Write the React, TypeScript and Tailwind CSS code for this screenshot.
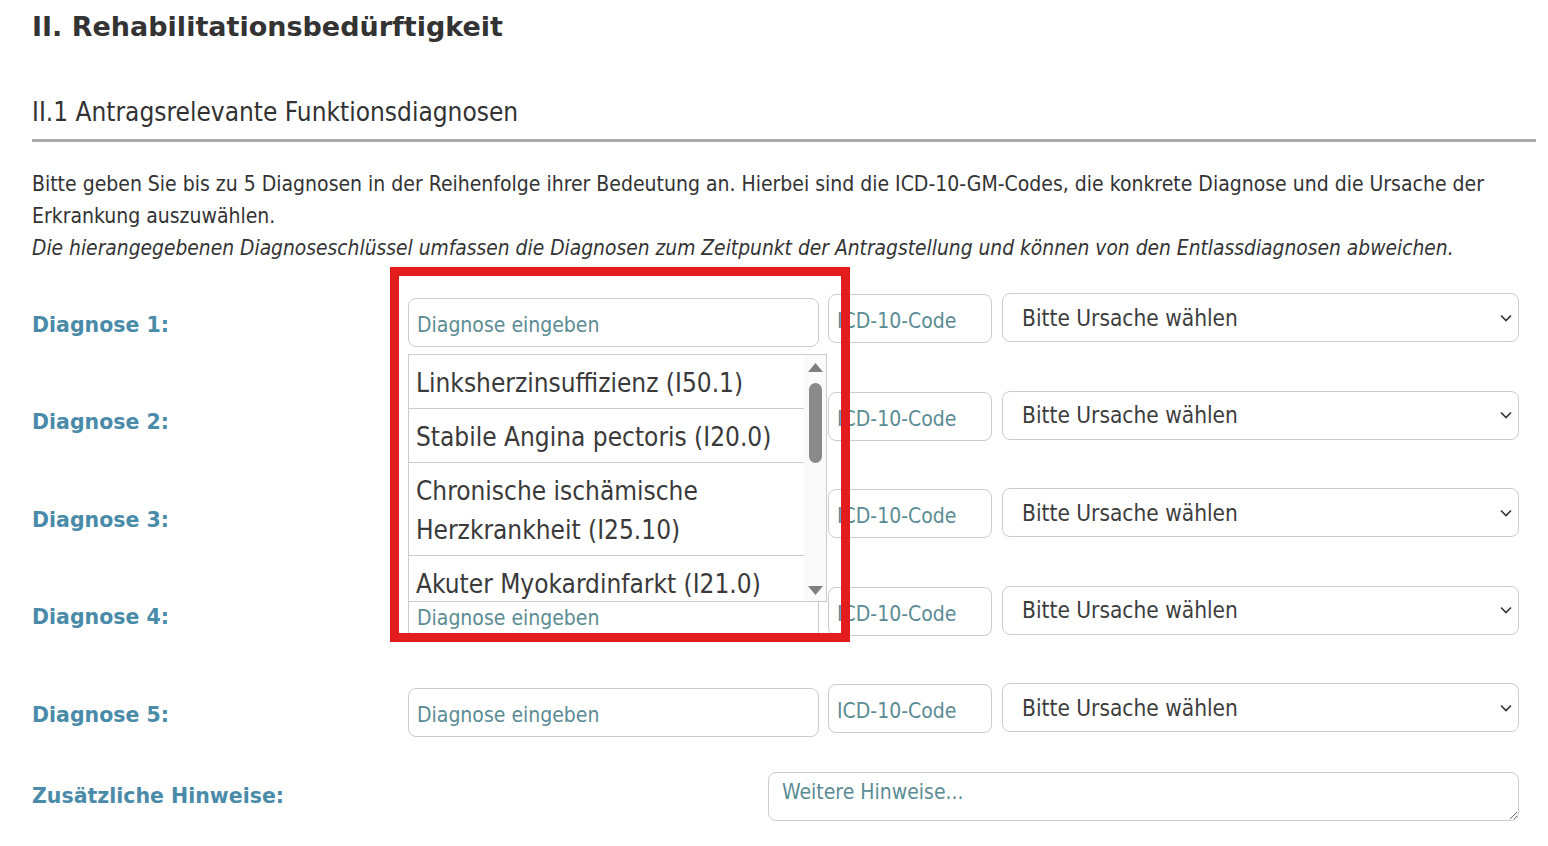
import React from "react";

const REG = "font-['DejaVu_Sans_Condensed','Liberation_Sans',sans-serif]";
const BOLD = "font-['DejaVu_Sans',sans-serif] font-bold";

const options = [
  "Linksherzinsuffizienz (I50.1)",
  "Stabile Angina pectoris (I20.0)",
  "Chronische ischämische Herzkrankheit (I25.10)",
  "Akuter Myokardinfarkt (I21.0)",
];

function Suggestions() {
  return (
    <div className="absolute left-0 top-[56px] z-10 flex h-[248px] w-[419px] overflow-hidden border border-[#cccccc] bg-white">
      <div className="flex-1">
        {options.map((o) => (
          <div
            key={o}
            className={`border-b border-[#cccccc] px-[7px] pt-[9px] pb-[5px] text-[26px] leading-[39px] text-[#3a3a3a] ${REG}`}
          >
            {o}
          </div>
        ))}
      </div>
      {/* scrollbar */}
      <div className="flex w-[22px] shrink-0 flex-col items-center bg-[#fafafa] pt-[8px] pb-[6px]">
        <svg width="15" height="9" viewBox="0 0 15 9">
          <path d="M7.5 0 L15 9 L0 9 Z" fill="#7f7f7f" />
        </svg>
        <div className="mt-[11px] h-[80px] w-[13px] rounded-full bg-[#8a8a8a]" />
        <div className="flex-1" />
        <svg width="15" height="9" viewBox="0 0 15 9">
          <path d="M0 0 L15 0 L7.5 9 Z" fill="#7f7f7f" />
        </svg>
      </div>
    </div>
  );
}

function DiagnoseRow({ n, open }: { n: number; open?: boolean }) {
  return (
    <div className="flex h-[50px] items-start">
      <div className={`mt-[5px] flex h-[49px] w-[376px] shrink-0 items-center pt-[5px] text-[20.5px] text-[#4a8ba9] ${BOLD}`}>
        Diagnose {n}:
      </div>
      <div className="relative mt-[5px] h-[49px] w-[411px] shrink-0">
        <input
          placeholder="Diagnose eingeben"
          className={`h-full w-full rounded-lg border border-[#cccccc] bg-white px-2 pt-[5px] text-[21px] text-[#333] outline-none placeholder:text-[#5b8c94] ${REG}`}
        />
        {open && <Suggestions />}
      </div>
      <input
        placeholder="ICD-10-Code"
        className={`ml-[9px] mt-[1px] h-[49px] w-[164px] shrink-0 rounded-lg border border-[#cccccc] bg-white px-2 pt-[5px] text-[21px] text-[#333] outline-none placeholder:text-[#5b8c94] ${REG}`}
      />
      <div className="relative ml-[10px] h-[49px] w-[517px] shrink-0">
        <select
          className={`h-full w-full appearance-none rounded-lg border border-[#cccccc] bg-white pl-[19px] pt-[2px] text-[22.5px] text-[#3d3d3d] outline-none ${REG}`}
        >
          <option>Bitte Ursache wählen</option>
        </select>
        <svg
          className="pointer-events-none absolute right-[7px] top-1/2 -translate-y-1/2"
          width="12"
          height="8"
          viewBox="0 0 12 8"
        >
          <path d="M1 1.5 L6 6.5 L11 1.5" fill="none" stroke="#333" strokeWidth="1.6" />
        </svg>
      </div>
    </div>
  );
}

export default function App() {
  return (
    <div className="relative min-h-screen w-full bg-white pl-8 pr-3">
      <h1 className={`pt-[9px] text-[27px] leading-[36px] text-[#333] ${BOLD}`}>
        II. Rehabilitationsbedürftigkeit
      </h1>

      <h2 className={`mt-[51px] border-b-[3px] border-[#aaaaaa] pb-[11px] text-[26px] leading-[32px] text-[#333] ${REG}`}>
        II.1 Antragsrelevante Funktionsdiagnosen
      </h2>

      <p className={`mt-[26px] text-[21px] leading-[32px] text-[#333] ${REG}`}>
        Bitte geben Sie bis zu 5 Diagnosen in der Reihenfolge ihrer Bedeutung an. Hierbei sind die ICD-10-GM-Codes, die
        konkrete Diagnose und die Ursache der Erkrankung auszuwählen.
        <br />
        <i className="text-[20.8px]">
          Die hierangegebenen Diagnoseschlüssel umfassen die Diagnosen zum Zeitpunkt der Antragstellung und können von den
          Entlassdiagnosen abweichen.
        </i>
      </p>

      <div className="mt-[29px] flex flex-col gap-[47.5px]">
        <DiagnoseRow n={1} open />
        <DiagnoseRow n={2} />
        <DiagnoseRow n={3} />
        <DiagnoseRow n={4} />
        <DiagnoseRow n={5} />
      </div>

      <div className="mt-[39px] flex items-center">
        <div className={`w-[736px] shrink-0 text-[20.5px] text-[#4a8ba9] ${BOLD}`}>Zusätzliche Hinweise:</div>
        <textarea
          placeholder="Weitere Hinweise..."
          className={`h-[49px] w-[751px] shrink-0 rounded-lg border border-[#cccccc] bg-white px-[13px] pt-1 text-[21px] text-[#333] outline-none placeholder:text-[#5b8c94] ${REG}`}
        />
      </div>

      {/* annotation frame */}
      <div className="pointer-events-none absolute left-[390px] top-[267px] z-20 h-[375px] w-[460px] border-[9px] border-[#e31d1d]" />
    </div>
  );
}
